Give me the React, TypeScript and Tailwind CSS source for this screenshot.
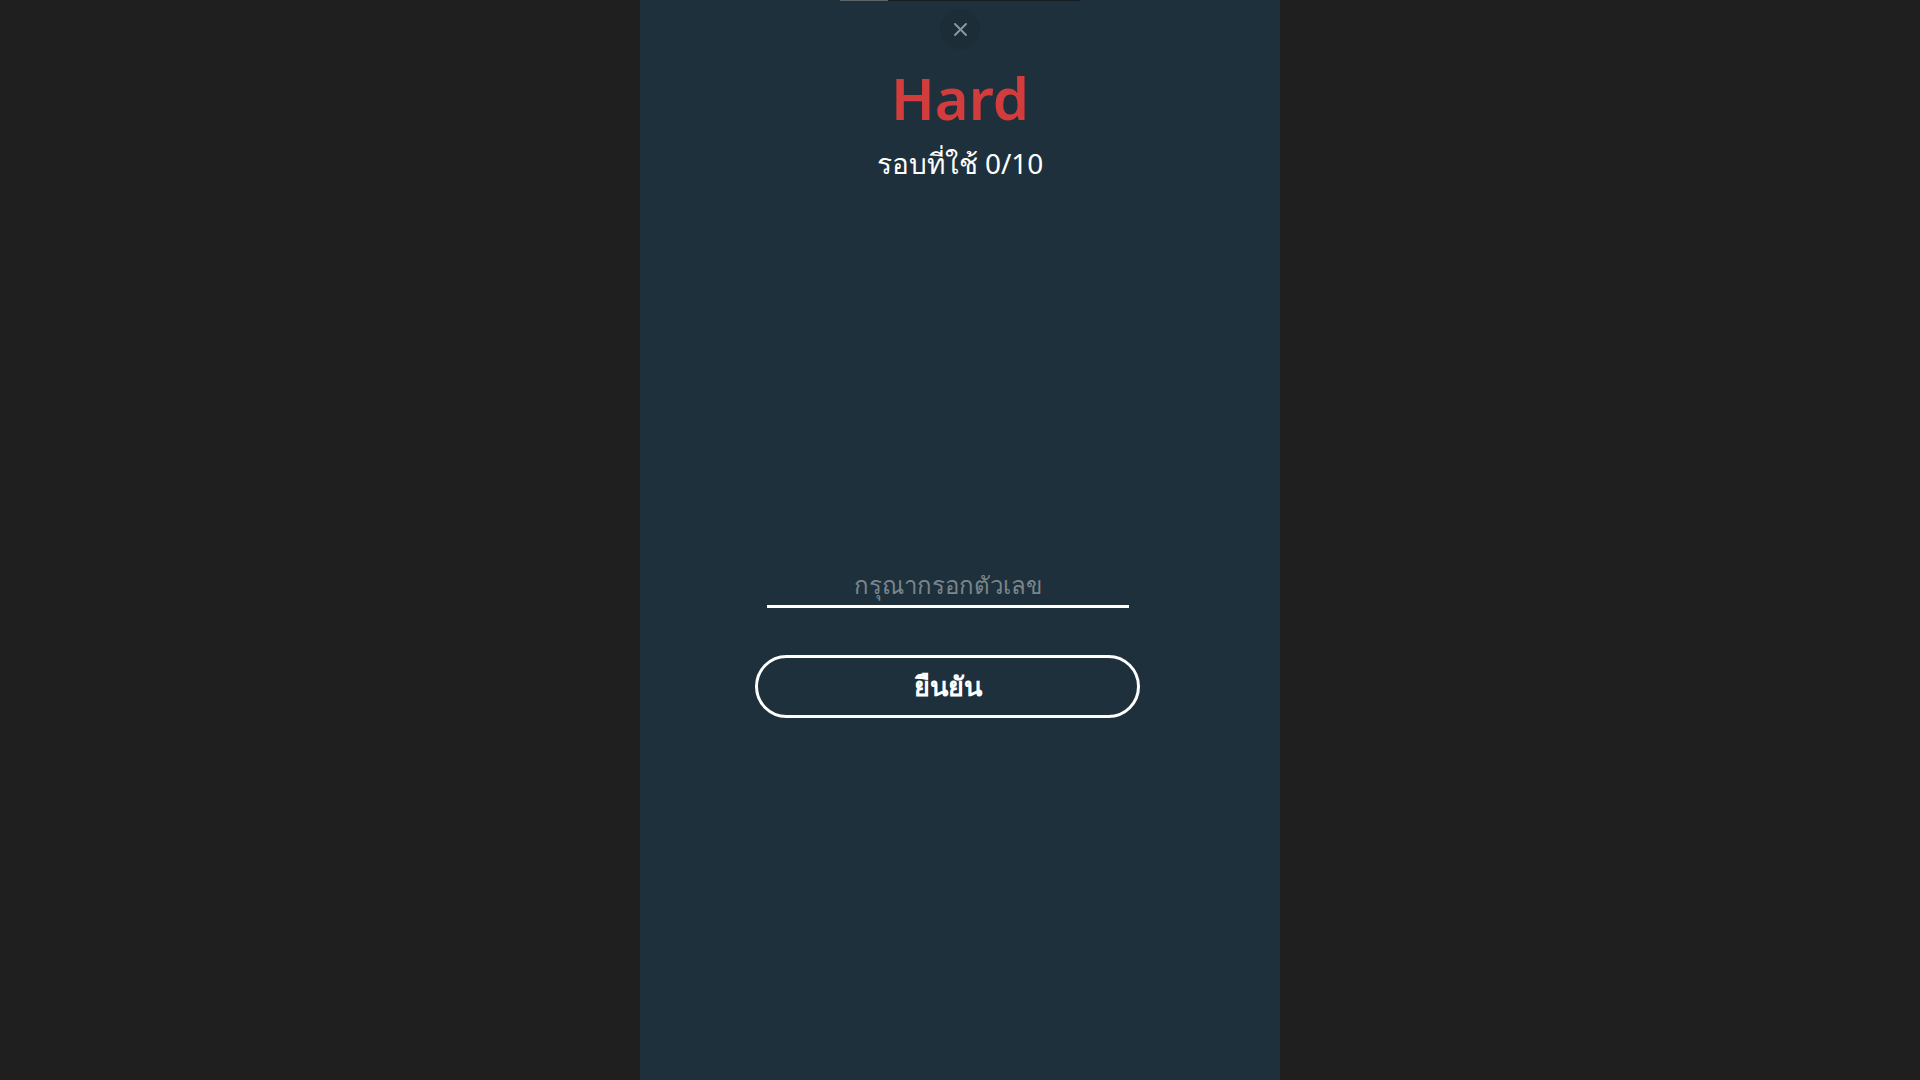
import React, { useState } from "react";

export default function App() {
  const [value, setValue] = useState("");

  return (
    <div className="min-h-screen w-full bg-[#1f1f1f] flex justify-center" style={{ fontFamily: '"Noto Sans", "Noto Sans CJK SC", sans-serif' }}>
      {/* Panel */}
      <div className="w-[640px] min-h-screen bg-[#1e303c] flex flex-col items-center">
        {/* Progress strip */}
        <div className="w-[240px] h-px bg-[#151d22] flex">
          <div className="w-[48px] h-px bg-[#5d6468]" />
        </div>

        {/* Close */}
        <button className="mt-[8px] w-[40px] h-[40px] rounded-full bg-[#1c2d38] flex items-center justify-center text-[#8c979d]">
          <svg width="15" height="15" viewBox="0 0 15 15" fill="none" stroke="currentColor" strokeWidth="2" strokeLinecap="round">
            <path d="M2 2 L13 13 M13 2 L2 13" />
          </svg>
        </button>

        {/* Title */}
        <h1 className="mt-[14px] text-[58px] leading-[70px] font-semibold text-[#d23c3c]">Hard</h1>
        <div className="mt-[12px] text-[28px] leading-[36px] text-white">รอบที่ใช้ 0/10</div>

        {/* Input */}
        <div className="mt-[386px] w-[640px] flex flex-col items-center pr-[25px]">
          <input
            value={value}
            onChange={(e) => setValue(e.target.value)}
            placeholder="กรุณากรอกตัวเลข"
            className="w-[362px] bg-transparent border-b-[3px] border-white text-center text-[24px] leading-[36px] text-white placeholder-[#7b858b] focus:outline-none pb-[2px]"
          />

          {/* Confirm */}
          <button className="mt-[47px] w-[385px] h-[63px] rounded-full border-[3px] border-white text-white text-[27px] font-bold flex items-center justify-center">
            ยืนยัน
          </button>
        </div>
      </div>
    </div>
  );
}
